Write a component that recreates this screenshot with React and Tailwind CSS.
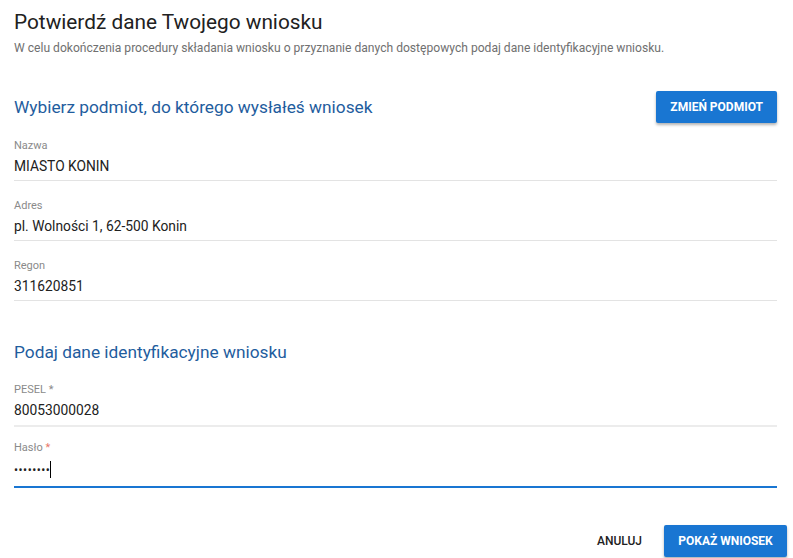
import React from 'react';

const Field = ({ label, value, required, requiredClass = 'text-[#8a8a8a]', first }) => (
  <div className={first ? '' : 'mt-[18px]'}>
    <div className="text-[11px] leading-[14px] text-[#8a8a8a]">
      {label}
      {required && <span className={requiredClass}> *</span>}
    </div>
    <div className="mt-[3px] pb-[4px] border-b border-[#e3e3e3] text-[13.8px] leading-[20px] text-[#212121]">
      {value}
    </div>
  </div>
);

const App = () => {
  return (
    <div className="w-[793px] h-[558px] bg-white overflow-hidden font-['Roboto','Liberation_Sans',sans-serif]">
      <div className="pl-[14px] pr-[16px] pt-[8px]">
        {/* Header */}
        <h1 className="text-[20.8px] leading-[28px] text-[#212121]">Potwierdź dane Twojego wniosku</h1>
        <p className="mt-[4px] text-[12.1px] leading-[16px] text-[#707070]">
          W celu dokończenia procedury składania wniosku o przyznanie danych dostępowych podaj dane identyfikacyjne wniosku.
        </p>

        {/* Podmiot */}
        <div className="mt-[35px] flex items-center justify-between">
          <h2 className="text-[17.3px] leading-[24px] text-[#1f5d9e]">Wybierz podmiot, do którego wysłałeś wniosek</h2>
          <button className="h-[32px] px-[14px] rounded-[2px] bg-[#1976d2] text-white text-[12px] font-bold uppercase shadow-[0_2px_3px_rgba(0,0,0,0.3)]">
            Zmień podmiot
          </button>
        </div>

        <div className="mt-[16px]">
          <Field first label="Nazwa" value="MIASTO KONIN" />
          <Field label="Adres" value="pl. Wolności 1, 62-500 Konin" />
          <Field label="Regon" value="311620851" />
        </div>

        {/* Dane identyfikacyjne */}
        <h2 className="mt-[39px] text-[17.3px] leading-[24px] text-[#1f5d9e]">Podaj dane identyfikacyjne wniosku</h2>

        <div className="mt-[19px]">
          <div className="text-[11px] leading-[14px] text-[#8a8a8a]">
            PESEL<span> *</span>
          </div>
          <div className="mt-[3px] pb-[5px] border-b-2 border-[#ececec] text-[13.8px] leading-[20px] text-[#212121]">
            80053000028
          </div>
        </div>

        <div className="mt-[14px]">
          <div className="text-[11px] leading-[14px] text-[#8a8a8a]">
            Hasło<span className="text-[#e8796b]"> *</span>
          </div>
          <div className="mt-[3px] pb-[5px] border-b-2 border-[#1976d2] h-[30px] flex items-center text-[#212121]">
            <span className="text-[12px] tracking-[0.5px] leading-[20px]">••••••••</span>
            <span className="w-[1px] h-[17px] bg-black" />
          </div>
        </div>
      </div>

      {/* Footer actions */}
      <div className="mt-[37px] pr-[6px] flex items-center justify-end gap-[12px]">
        <button className="h-[32px] px-[10px] text-[12px] font-medium uppercase text-[#212121]">Anuluj</button>
        <button className="h-[32px] w-[123px] rounded-[2px] bg-[#1976d2] text-white text-[12px] font-bold uppercase shadow-[0_2px_3px_rgba(0,0,0,0.3)]">
          Pokaż wniosek
        </button>
      </div>
    </div>
  );
};

export default App;
